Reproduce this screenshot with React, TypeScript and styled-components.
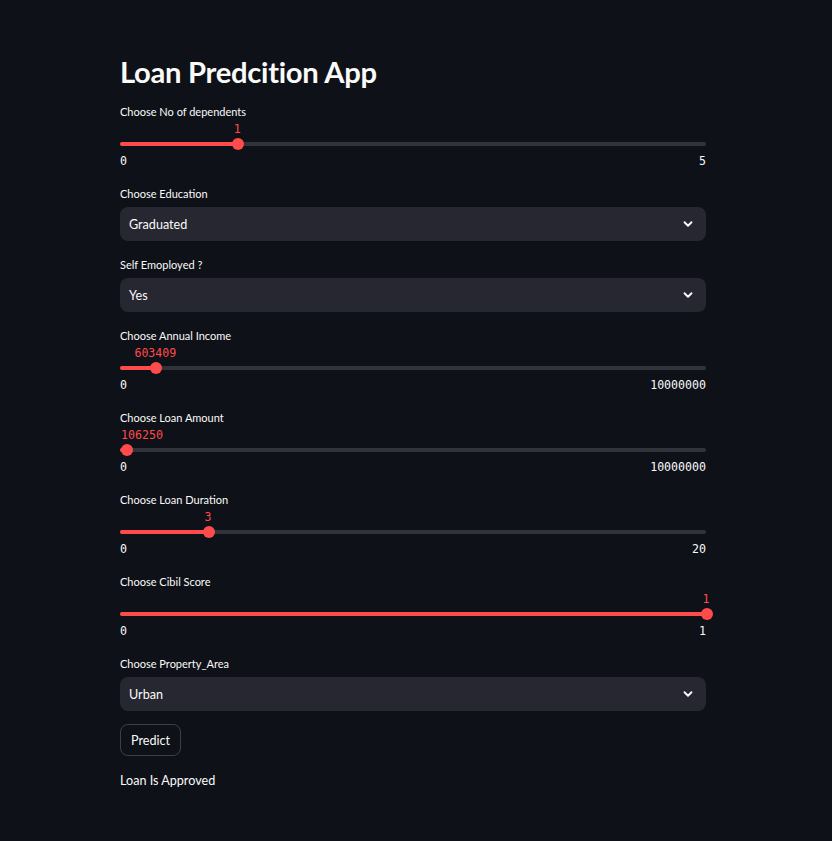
import React from "react";
import styled, { createGlobalStyle } from "styled-components";
import { ChevronDown } from "lucide-react";

const Global = createGlobalStyle`
  html, body { margin: 0; padding: 0; background: #0e1117; }
  body { font-family: "Lato", "Noto Sans", sans-serif; color: #fafafa; }
  * { box-sizing: border-box; }
`;

const Page = styled.div`
  min-height: 841px;
  background: #0e1117;
  padding: 54px 0 0 120px;
`;

const Column = styled.div`
  width: 586px;
  display: flex;
  flex-direction: column;
`;

const Title = styled.h1`
  margin: 0 0 13px 0;
  height: 36px;
  line-height: 36px;
  font-size: 29.2px;
  font-weight: 700;
  letter-spacing: -0.3px;
`;

const Label = styled.div`
  height: 18px;
  line-height: 18px;
  font-size: 11px;
  color: #fafafa;
`;

const SliderBlock = styled.div`
  height: 82px;
  display: flex;
  flex-direction: column;
`;

const SelectBlock = styled.div`
  height: 71px;
  display: flex;
  flex-direction: column;
`;

const SliderArea = styled.div`
  position: relative;
  height: 33px;
`;

const Track = styled.div`
  position: absolute;
  left: 0;
  right: 0;
  top: 21px;
  height: 4px;
  border-radius: 2px;
  background: #31333b;
`;

const Fill = styled.div`
  position: absolute;
  left: 0;
  top: 0;
  bottom: 0;
  border-radius: 2px;
  background: #ff4b4b;
`;

const Thumb = styled.div`
  position: absolute;
  top: 17px;
  width: 12px;
  height: 12px;
  margin-left: -6px;
  border-radius: 50%;
  background: #ff4b4b;
`;

const ValueTag = styled.div`
  position: absolute;
  top: 1px;
  font-family: "DejaVu Sans Mono", "Liberation Mono", monospace;
  font-size: 11.6px;
  line-height: 14px;
  color: #ff4b4b;
  white-space: nowrap;
`;

const Ticks = styled.div`
  display: flex;
  justify-content: space-between;
  font-family: "DejaVu Sans Mono", "Liberation Mono", monospace;
  font-size: 11.6px;
  line-height: 14px;
  color: #fafafa;
`;

const SelectBox = styled.div`
  margin-top: 4px;
  height: 34px;
  border-radius: 8px;
  background: #262730;
  display: flex;
  align-items: center;
  justify-content: space-between;
  padding: 0 11px 0 9px;
  font-size: 12.6px;
  color: #fafafa;
`;

const Button = styled.button`
  align-self: flex-start;
  height: 32px;
  padding: 0 10px;
  border-radius: 8px;
  border: 1px solid rgba(250, 250, 250, 0.2);
  background: transparent;
  color: #fafafa;
  font-family: "Lato", "Noto Sans", sans-serif;
  font-size: 12.6px;
  margin-top: -2px;
`;

const Result = styled.div`
  margin-top: 16px;
  font-size: 12.6px;
  line-height: 18px;
`;

const W = 586;

function Slider({ label, min, max, value }: { label: string; min: number; max: number; value: number }) {
  const pct = (value - min) / (max - min);
  const x = pct * W;
  const text = String(value);
  const tw = text.length * 6.98;
  let left = x - tw / 2;
  if (left < 0) left = 1;
  return (
    <SliderBlock>
      <Label>{label}</Label>
      <SliderArea>
        <ValueTag style={{ left }}>{text}</ValueTag>
        <Track>
          <Fill style={{ width: x }} />
        </Track>
        <Thumb style={{ left: x + 1 }} />
      </SliderArea>
      <Ticks>
        <span>{min}</span>
        <span>{max}</span>
      </Ticks>
    </SliderBlock>
  );
}

function Select({ label, value }: { label: string; value: string }) {
  return (
    <SelectBlock>
      <Label>{label}</Label>
      <SelectBox>
        <span>{value}</span>
        <ChevronDown size={14} strokeWidth={3.2} color="#fafafa" />
      </SelectBox>
    </SelectBlock>
  );
}

export default function App() {
  return (
    <Page>
      <Global />
      <Column>
        <Title>Loan Predcition App</Title>
        <Slider label="Choose No of dependents" min={0} max={5} value={1} />
        <Select label="Choose Education" value="Graduated" />
        <Select label="Self Emoployed ?" value="Yes" />
        <Slider label="Choose Annual Income" min={0} max={10000000} value={603409} />
        <Slider label="Choose Loan Amount" min={0} max={10000000} value={106250} />
        <Slider label="Choose Loan Duration" min={0} max={20} value={3} />
        <Slider label="Choose Cibil Score" min={0} max={1} value={1} />
        <Select label="Choose Property_Area" value="Urban" />
        <Button>Predict</Button>
        <Result>Loan Is Approved</Result>
      </Column>
    </Page>
  );
}
